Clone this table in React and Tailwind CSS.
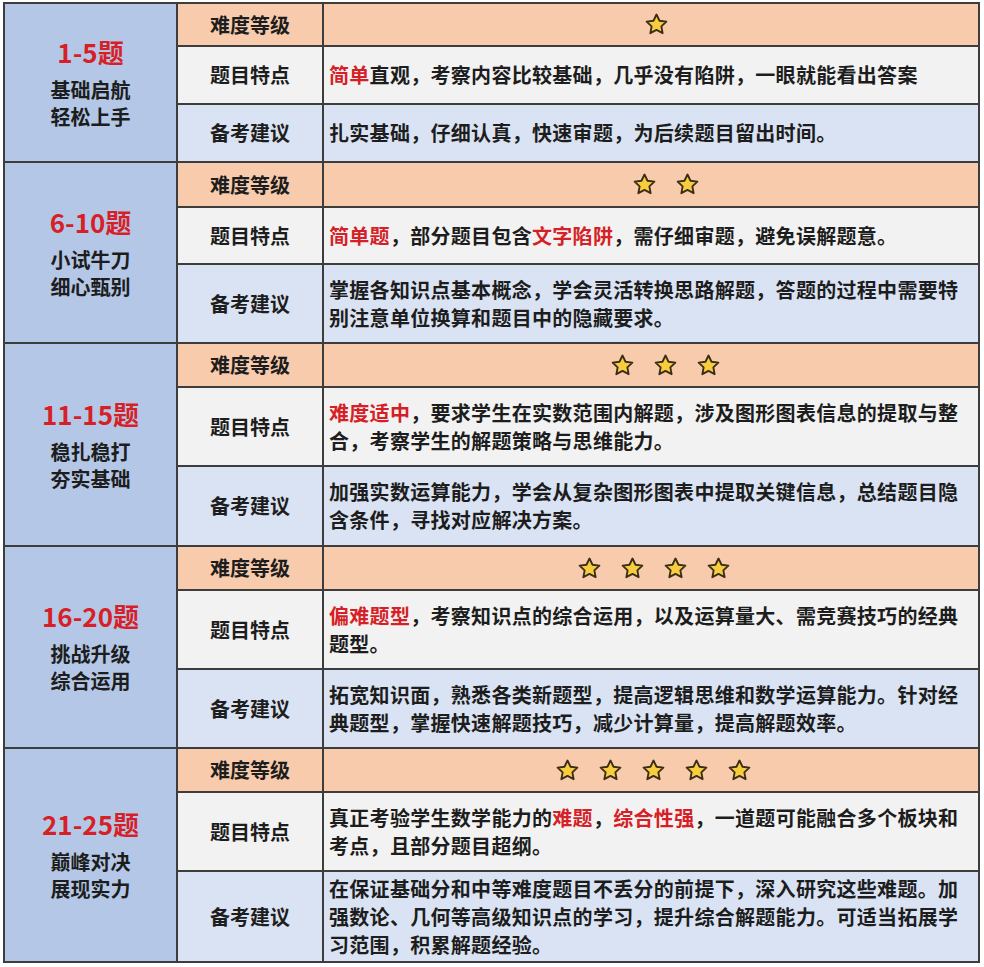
import React from "react";

const groups = [
  {
    title: "1-5题",
    sub: ["基础启航", "轻松上手"],
    stars: 1,
    starShift: "ml-[10px]",
    heights: ["h-[43px]", "h-[58px]", "h-[56px]"],
    feature: [[{ t: "简单", red: true }, { t: "直观，考察内容比较基础，几乎没有陷阱，一眼就能看出答案" }]],
    advice: ["扎实基础，仔细认真，快速审题，为后续题目留出时间。"],
  },
  {
    title: "6-10题",
    sub: ["小试牛刀", "细心甄别"],
    stars: 2,
    starShift: "ml-[30px]",
    heights: ["h-[45px]", "h-[57px]", "h-[77px]"],
    feature: [
      [
        { t: "简单题", red: true },
        { t: "，部分题目包含" },
        { t: "文字陷阱", red: true },
        { t: "，需仔细审题，避免误解题意。" },
      ],
    ],
    advice: ["掌握各知识点基本概念，学会灵活转换思路解题，答题的过程中需要特", "别注意单位换算和题目中的隐藏要求。"],
  },
  {
    title: "11-15题",
    sub: ["稳扎稳打", "夯实基础"],
    stars: 3,
    starShift: "ml-[28px]",
    heights: ["h-[44px]", "h-[79px]", "h-[78px]"],
    feature: [
      [{ t: "难度适中", red: true }, { t: "，要求学生在实数范围内解题，涉及图形图表信息的提取与整" }],
      [{ t: "合，考察学生的解题策略与思维能力。" }],
    ],
    advice: ["加强实数运算能力，学会从复杂图形图表中提取关键信息，总结题目隐", "含条件，寻找对应解决方案。"],
  },
  {
    title: "16-20题",
    sub: ["挑战升级", "综合运用"],
    stars: 4,
    starShift: "ml-[6px]",
    heights: ["h-[44px]", "h-[79px]", "h-[77px]"],
    feature: [
      [{ t: "偏难题型", red: true }, { t: "，考察知识点的综合运用，以及运算量大、需竞赛技巧的经典" }],
      [{ t: "题型。" }],
    ],
    advice: ["拓宽知识面，熟悉各类新题型，提高逻辑思维和数学运算能力。针对经", "典题型，掌握快速解题技巧，减少计算量，提高解题效率。"],
  },
  {
    title: "21-25题",
    sub: ["巅峰对决", "展现实力"],
    stars: 5,
    starShift: "ml-[4px]",
    heights: ["h-[44px]", "h-[79px]", "h-[89px]"],
    feature: [
      [
        { t: "真正考验学生数学能力的" },
        { t: "难题", red: true },
        { t: "，" },
        { t: "综合性强", red: true },
        { t: "，一道题可能融合多个板块和" },
      ],
      [{ t: "考点，且部分题目超纲。" }],
    ],
    advice: [
      "在保证基础分和中等难度题目不丢分的前提下，深入研究这些难题。加",
      "强数论、几何等高级知识点的学习，提升综合解题能力。可适当拓展学",
      "习范围，积累解题经验。",
    ],
  },
];

function Star() {
  return (
    <svg viewBox="0 0 24 24" className="w-[25px] h-[25px]">
      <path
        d="M12 2.4l2.9 6 6.6.85-4.85 4.55 1.25 6.55L12 17.2l-5.9 3.15 1.25-6.55L2.5 9.25l6.6-.85z"
        fill="#f8cd3d"
        stroke="#3b2e19"
        strokeWidth="1.8"
        strokeLinejoin="round"
      />
    </svg>
  );
}

function Label({ children }) {
  return (
    <div className="w-[146px] shrink-0 border-r-2 border-[#3d3d3d] flex items-center justify-center text-[20px] font-bold text-[#1d1d1d]">
      {children}
    </div>
  );
}

function Group({ g }) {
  return (
    <div className="flex border-b-2 border-[#3d3d3d]">
      {/* left label */}
      <div className="w-[173px] shrink-0 bg-[#b4c7e7] border-r-2 border-[#3d3d3d] flex flex-col items-center justify-center">
        <div className="text-[26px] leading-[32px] font-bold text-[#d61f26] mb-[8px]">{g.title}</div>
        {g.sub.map((s) => (
          <div key={s} className="text-[20px] leading-[27px] font-bold text-[#1d1d1d]">
            {s}
          </div>
        ))}
      </div>

      <div className="flex-1 flex flex-col">
        {/* 难度等级 */}
        <div className={`flex ${g.heights[0]} border-b-2 border-[#3d3d3d] bg-[#f8cbad]`}>
          <Label>难度等级</Label>
          <div className="flex-1 flex items-center justify-center">
            <div className={`flex items-center gap-[18px] ${g.starShift}`}>
              {Array.from({ length: g.stars }).map((_, i) => (
                <Star key={i} />
              ))}
            </div>
          </div>
        </div>

        {/* 题目特点 */}
        <div className={`flex ${g.heights[1]} border-b-2 border-[#3d3d3d] bg-[#f2f2f2]`}>
          <Label>题目特点</Label>
          <div className="flex-1 flex flex-col justify-center pl-[5px] text-[20px] leading-[28px] tracking-[0.3px] font-bold text-[#1d1d1d]">
            {g.feature.map((line, i) => (
              <div key={i} className="whitespace-nowrap">
                {line.map((p, j) => (
                  <span key={j} className={p.red ? "text-[#d61f26]" : ""}>
                    {p.t}
                  </span>
                ))}
              </div>
            ))}
          </div>
        </div>

        {/* 备考建议 */}
        <div className={`flex ${g.heights[2]} bg-[#dae3f3]`}>
          <Label>备考建议</Label>
          <div className="flex-1 flex flex-col justify-center pl-[5px] text-[20px] leading-[28px] tracking-[0.3px] font-bold text-[#1d1d1d]">
            {g.advice.map((line, i) => (
              <div key={i} className="whitespace-nowrap">
                {line}
              </div>
            ))}
          </div>
        </div>
      </div>
    </div>
  );
}

export default function App() {
  return (
    <div
      className="w-[984px] h-[967px] bg-white pt-[2px] pl-[3px]"
      style={{ fontFamily: '"Noto Sans CJK SC", "Noto Sans", sans-serif' }}
    >
      <div className="w-[977px] border-t-2 border-l-2 border-r-2 border-[#3d3d3d]">
        {groups.map((g) => (
          <Group key={g.title} g={g} />
        ))}
      </div>
    </div>
  );
}
